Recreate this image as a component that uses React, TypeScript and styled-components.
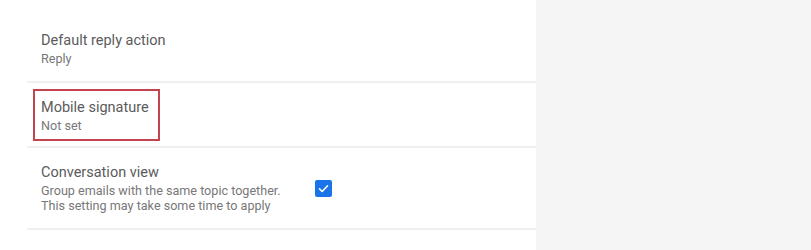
import React from "react";
import styled, { createGlobalStyle } from "styled-components";

const Global = createGlobalStyle`
  html, body { margin: 0; padding: 0; background: #f5f5f5; }
  body { font-family: Roboto, "Noto Sans", "Liberation Sans", sans-serif; }
`;

const Page = styled.div`
  display: flex;
  width: 811px;
  height: 250px;
  overflow: hidden;
  background: #f5f5f5;
`;

const Panel = styled.div`
  width: 536px;
  flex: none;
  background: #ffffff;
  padding-left: 27px;
  box-sizing: border-box;
`;

const Item = styled.div<{ $top: number; $bottom: number }>`
  display: grid;
  grid-template-columns: 256px auto;
  column-gap: 18px;
  align-items: center;
  padding: ${(p) => p.$top}px 0 ${(p) => p.$bottom}px 14px;
  border-bottom: 2px solid #f0f0f0;
`;

const Highlight = styled.div`
  grid-column: 1 / -1;
  justify-self: start;
  margin-left: -8px;
  border: 2px solid #c3434e;
  padding: 7px 9px 7px 6px;
`;

const TextBlock = styled.div`
  display: flex;
  flex-direction: column;
`;

const Title = styled.div`
  font-size: 14.5px;
  line-height: 20px;
  color: #5b5b5b;
  white-space: nowrap;
`;

const Subtitle = styled.div`
  font-size: 12.6px;
  line-height: 13.5px;
  color: #787878;
  white-space: nowrap;
  margin-top: 1px;
`;

const CheckBox = styled.div`
  width: 17px;
  height: 17px;
  border-radius: 2px;
  background: #1a73e8;
  display: flex;
  align-items: center;
  justify-content: center;
  margin-top: 2px;
`;

const Check = () => (
  <CheckBox>
    <svg width="13" height="13" viewBox="0 0 24 24" fill="none">
      <path d="M4.5 12.5l5 5 10-10.5" stroke="#fff" strokeWidth="3" strokeLinecap="round" strokeLinejoin="round" />
    </svg>
  </CheckBox>
);

export default function App() {
  return (
    <>
      <Global />
      <Page>
        <Panel>
          <Item $top={31} $bottom={15}>
            <TextBlock>
              <Title>Default reply action</Title>
              <Subtitle>Reply</Subtitle>
            </TextBlock>
          </Item>
          <Item $top={6} $bottom={5}>
            <Highlight>
              <TextBlock>
                <Title>Mobile signature</Title>
                <Subtitle>Not set</Subtitle>
              </TextBlock>
            </Highlight>
          </Item>
          <Item $top={15} $bottom={16}>
            <TextBlock>
              <Title>Conversation view</Title>
              <Subtitle>Group emails with the same topic together.</Subtitle>
              <Subtitle>This setting may take some time to apply</Subtitle>
            </TextBlock>
            <Check />
          </Item>
        </Panel>
      </Page>
    </>
  );
}
